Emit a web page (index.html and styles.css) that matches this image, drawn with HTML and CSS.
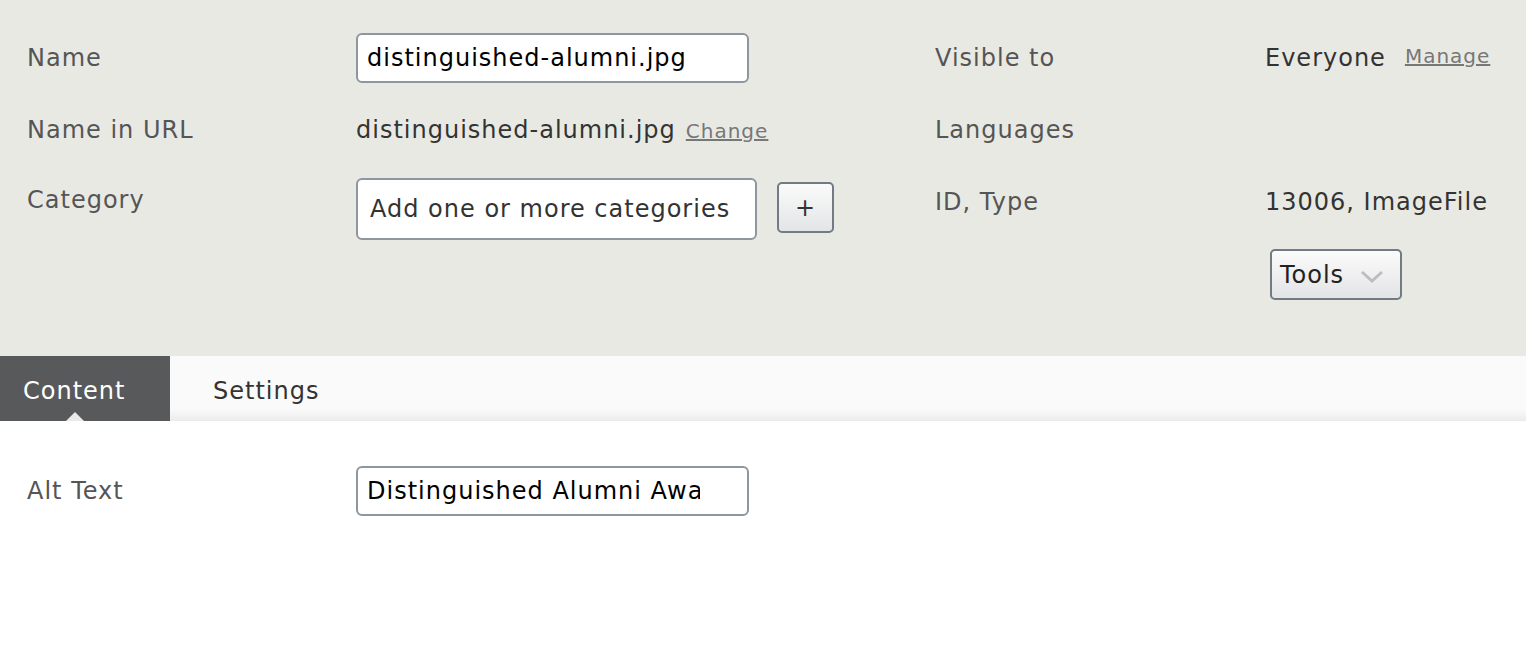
FILE: index.html
```html
<!DOCTYPE html>
<html lang="en">
<head>
  <meta charset="UTF-8" />
  <title>Edit image file</title>
  <link rel="stylesheet" href="styles.css">
</head>
<body>

  <div class="panel">
    <div class="props">
      <div class="row">
        <span class="label">Name</span>
        <span><input class="field" type="text" value="distinguished-alumni.jpg" /></span>
      </div>
      <div class="row">
        <span class="label">Name in URL</span>
        <span class="value">distinguished-alumni.jpg<a href="#" class="link">Change</a></span>
      </div>
      <div class="row row-top">
        <span class="label cat-label">Category</span>
        <span class="cat">
          <input class="field cat-field" type="text" placeholder="Add one or more categories" />
          <button class="btn plus" type="button">+</button>
        </span>
      </div>
    </div>

    <div class="meta">
      <div class="row">
        <span class="label">Visible to</span>
        <span class="value">Everyone<a href="#" class="link manage">Manage</a></span>
      </div>
      <div class="row">
        <span class="label">Languages</span>
        <span></span>
      </div>
      <div class="row">
        <span class="label">ID, Type</span>
        <span class="value">13006, ImageFile</span>
      </div>
      <div class="tools-row">
        <button class="btn tools" type="button">Tools
          <svg width="24" height="14" viewBox="0 0 24 14"><polyline points="2,2 12,11 22,2" fill="none" stroke="#bdbdbd" stroke-width="3"/></svg>
        </button>
      </div>
    </div>
  </div>

  <div class="tabs">
    <a href="#" class="tab active">Content</a>
    <a href="#" class="tab">Settings</a>
  </div>

  <div class="content">
    <div class="row">
      <span class="label">Alt Text</span>
      <span><input class="field alt-field" type="text" value="Distinguished Alumni Award" /></span>
    </div>
  </div>

</body>
</html>
```

FILE: styles.css
```css
body { margin: 0; font-family: "DejaVu Sans", Verdana, sans-serif; font-size: 24px; letter-spacing: 1px; color: #333; background: #fff; }

.panel { display: flex; height: 356px; box-sizing: border-box; padding: 22px 0 0 27px; background: #e9e9e4; }
.props { width: 908px; }
.meta { flex: 1; }

.row { display: grid; grid-template-columns: 329px 1fr; min-height: 72px; align-items: center; line-height: 30px; }
.row-top { align-items: start; }
.meta .row { grid-template-columns: 330px 1fr; }

.label { color: #555; }
.value { color: #333; }
.cat-label { padding-top: 19px; }

.link { color: #777; font-size: 20px; margin-left: 10px; }
.manage { margin-left: 19px; position: relative; top: -3px; }

.field { box-sizing: border-box; width: 393px; height: 50px; padding: 0 9px; border: 2px solid #8e979f; border-radius: 6px; background: #fff; font: 24px "DejaVu Sans", Verdana, sans-serif; letter-spacing: 1px; color: #000; }
.field::placeholder { color: #333; }
.alt-field { padding-right: 47px; }

.cat { display: flex; align-items: flex-start; gap: 20px; padding-top: 12px; }
.cat-field { width: 401px; height: 62px; padding-left: 12px; }

.btn { box-sizing: border-box; border: 2px solid #707b84; border-radius: 5px; background: linear-gradient(#fbfbfb, #e3e4e6); color: #222; font: 24px "DejaVu Sans", Verdana, sans-serif; letter-spacing: 1px; cursor: pointer; }
.plus { width: 57px; height: 51px; margin-top: 4px; padding: 0; color: #333; }

.tools-row { padding: 11px 0 0 335px; }
.tools { display: flex; align-items: center; gap: 16px; width: 132px; height: 51px; padding: 0 0 0 8px; }
.tools svg { margin-top: 4px; }

.tabs { display: flex; height: 65px; background: linear-gradient(#fafafa 82%, #ebebeb); }
.tab { display: flex; align-items: center; height: 100%; padding: 0 43px; padding-top: 4px; box-sizing: border-box; color: #333; text-decoration: none; }
.tab.active { position: relative; width: 170px; padding-left: 23px; padding-right: 0; background: #58595b; color: #fff; }
.tab.active::after { content: ""; position: absolute; left: 66px; bottom: 0; border: 9px solid transparent; border-bottom-color: #e9e9e9; border-top: 0; }

.content { padding: 34px 0 0 27px; }
```
